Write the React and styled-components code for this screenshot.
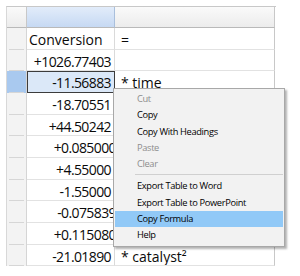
import styled, { createGlobalStyle } from "styled-components";

const GlobalStyle = createGlobalStyle`
  html, body {
    margin: 0;
    padding: 0;
    background: #ffffff;
  }
`;

const Page = styled.div`
  position: relative;
  width: 300px;
  height: 276px;
  padding: 6px 0 0 6px;
  box-sizing: border-box;
  font-family: "Open Sans", "Noto Sans", sans-serif;
  overflow: hidden;
`;

const Grid = styled.div`
  display: grid;
  grid-template-columns: 20px 88px 160px;
  grid-template-rows: 21px repeat(11, 21.67px);
  width: 269px;
  border-top: 1px solid #c8c8c8;
  border-left: 1px solid #d8d8d8;
`;

const HeadCell = styled.div`
  box-sizing: border-box;
  border-right: 1px solid ${(p) => (p.$active ? "#a9bfdc" : "#c8c8c8")};
  border-bottom: 1px solid #b9b9b9;
  background: ${(p) =>
    p.$active
      ? "linear-gradient(#e2ecfa, #c6d9f3)"
      : "linear-gradient(#fafafa, #ececec)"};
`;

const RowHead = styled.div`
  position: relative;
  box-sizing: border-box;
  border-right: 1px solid #d5d5d5;
  background: ${(p) => (p.$active ? "#a9c9ef" : "#f3f3f3")};

  &::after {
    content: "";
    position: absolute;
    left: 2px;
    right: 2px;
    bottom: 0;
    height: 1px;
    background: #d6d6d6;
  }
`;

const Cell = styled.div`
  box-sizing: border-box;
  border-right: 1px solid ${(p) => (p.$last ? "#c8c8c8" : "#dadada")};
  border-bottom: 1px solid #e2e2e2;
  font-size: 14px;
  line-height: 20px;
  color: #0a0a0a;
  white-space: nowrap;
  overflow: hidden;
  text-align: ${(p) => (p.$num ? "right" : "left")};
  letter-spacing: ${(p) => (p.$num ? "-0.6px" : "0")};
  padding: ${(p) =>
    p.$num ? `2px ${p.$tight ? 0 : 3}px 0 2px` : `2px 4px 0 ${p.$pad}px`};
  background: ${(p) => (p.$selected ? "#dbe8f8" : "#fff")};
  outline: ${(p) => (p.$selected ? "1px solid #3c3c3c" : "none")};
  outline-offset: -1px;
  margin-right: ${(p) => (p.$tight ? "-2px" : "0")};
`;

const Menu = styled.div`
  position: absolute;
  left: 113px;
  top: 88px;
  width: 172px;
  padding: 2px 1px 2px 1px;
  box-sizing: border-box;
  background: #f2f2f2;
  border: 1px solid #a8a8a8;
  box-shadow: 2px 2px 2px rgba(0, 0, 0, 0.3);
  font-family: "Open Sans", "Noto Sans", sans-serif;
  font-size: 9.3px;
  letter-spacing: -0.35px;
`;

const Item = styled.div`
  height: 16.3px;
  line-height: 16.3px;
  padding-left: 22px;
  color: ${(p) => (p.$disabled ? "#8d8d8d" : "#000")};
  background: ${(p) => (p.$hover ? "#91c9f7" : "transparent")};
  white-space: nowrap;
`;

const Separator = styled.div`
  height: 1px;
  margin: 2px 0 3px 20px;
  background: #d0d0d0;
`;

const rows = [
  { v: "Conversion", t: "=", label: true },
  { v: "+1026.77403", t: "" },
  { v: "-11.56883", t: "* time", selected: true },
  { v: "-18.70551", t: "" },
  { v: "+44.50242", t: "" },
  { v: "+0.085000", t: "", tight: true },
  { v: "+4.55000", t: "" },
  { v: "-1.55000", t: "" },
  { v: "-0.075839", t: "", tight: true },
  { v: "+0.115080", t: "", tight: true },
  { v: "-21.01890", t: "* catalyst²" },
];

const menuItems = [
  { label: "Cut", disabled: true },
  { label: "Copy" },
  { label: "Copy With Headings" },
  { label: "Paste", disabled: true },
  { label: "Clear", disabled: true },
  { sep: true },
  { label: "Export Table to Word" },
  { label: "Export Table to PowerPoint" },
  { label: "Copy Formula", hover: true },
  { label: "Help" },
];

export default function App() {
  return (
    <>
      <GlobalStyle />
      <Page>
        <Grid>
          <HeadCell />
          <HeadCell $active />
          <HeadCell />
          {rows.map((r, i) => [
            <RowHead key={`h${i}`} $active={r.selected} />,
            <Cell
              key={`a${i}`}
              $num={!r.label}
              $pad={2}
              $tight={r.tight}
              $selected={r.selected}
            >
              {r.v}
            </Cell>,
            <Cell key={`b${i}`} $last $pad={6}>
              {r.t}
            </Cell>,
          ])}
        </Grid>
        <Menu>
          {menuItems.map((m, i) =>
            m.sep ? (
              <Separator key={i} />
            ) : (
              <Item key={i} $disabled={m.disabled} $hover={m.hover}>
                {m.label}
              </Item>
            )
          )}
        </Menu>
      </Page>
    </>
  );
}
